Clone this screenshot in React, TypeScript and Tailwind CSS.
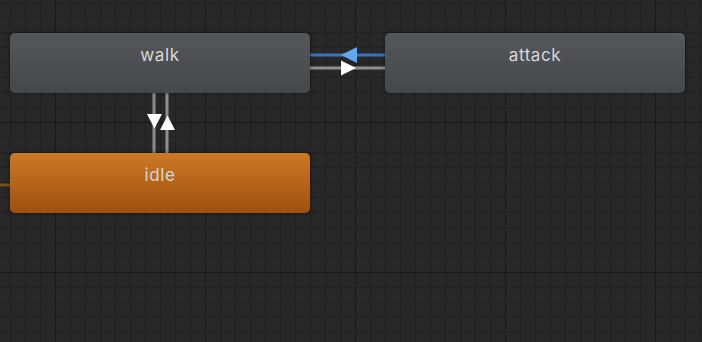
import React from "react";

function Grid() {
  const v: React.ReactElement[] = [];
  for (let x = 10; x < 702; x += 15) {
    const major = (x - 55) % 150 === 0;
    v.push(
      <line key={"v" + x} x1={x + 0.5} y1={0} x2={x + 0.5} y2={342} stroke={major ? "#191919" : "#212121"} strokeWidth={1} />
    );
  }
  for (let y = 2; y < 342; y += 15) {
    const major = (y - 122) % 150 === 0;
    v.push(
      <line key={"h" + y} x1={0} y1={y + 0.5} x2={702} y2={y + 0.5} stroke={major ? "#191919" : "#212121"} strokeWidth={1} />
    );
  }
  return (
    <svg className="absolute inset-0" width={702} height={342}>
      {v}
    </svg>
  );
}

function Node({ label, x, y, orange }: { label: string; x: string; y: string; orange?: boolean }) {
  return (
    <div
      className={`absolute ${x} ${y} w-[300px] h-[60px] rounded-[5px] shadow-[0_0_4px_rgba(0,0,0,0.45)] text-center text-[17px] leading-[20px] pt-[12px] tracking-[0.6px] text-[#d8d8d8] ${
        orange
          ? "bg-gradient-to-b from-[#cd7826] to-[#9e500e]"
          : "bg-gradient-to-b from-[#55575a] to-[#46474a]"
      }`}
      style={{ fontFamily: "Inter, 'Noto Sans', sans-serif" }}
    >
      {label}
    </div>
  );
}

export default function App() {
  return (
    <div className="relative w-[702px] h-[342px] overflow-hidden bg-[#282828]">
      <Grid />
      <svg className="absolute inset-0" width={702} height={342}>
        {/* entry to idle */}
        <line x1={0} y1={185} x2={12} y2={185} stroke="#7d4f12" strokeWidth={3} />
        {/* walk <-> attack */}
        <line x1={308} y1={55} x2={387} y2={55} stroke="#3a72b6" strokeWidth={3} />
        <polygon points="341,55 357,47 357,63" fill="#62a6ee" />
        <line x1={308} y1={68} x2={387} y2={68} stroke="#8f8f8f" strokeWidth={3} />
        <polygon points="356,68 341,60.5 341,75.5" fill="#ffffff" />
        {/* walk <-> idle */}
        <line x1={154} y1={91} x2={154} y2={155} stroke="#8a8a8a" strokeWidth={3} />
        <polygon points="147,114 162,114 154.5,128.5" fill="#ffffff" />
        <line x1={167} y1={91} x2={167} y2={155} stroke="#8f8f8f" strokeWidth={3} />
        <polygon points="160,130 175,130 167.5,115.5" fill="#ffffff" />
      </svg>
      <Node label="walk" x="left-[10px]" y="top-[33px]" />
      <Node label="attack" x="left-[385px]" y="top-[33px]" />
      <Node label="idle" x="left-[10px]" y="top-[153px]" orange />
    </div>
  );
}
